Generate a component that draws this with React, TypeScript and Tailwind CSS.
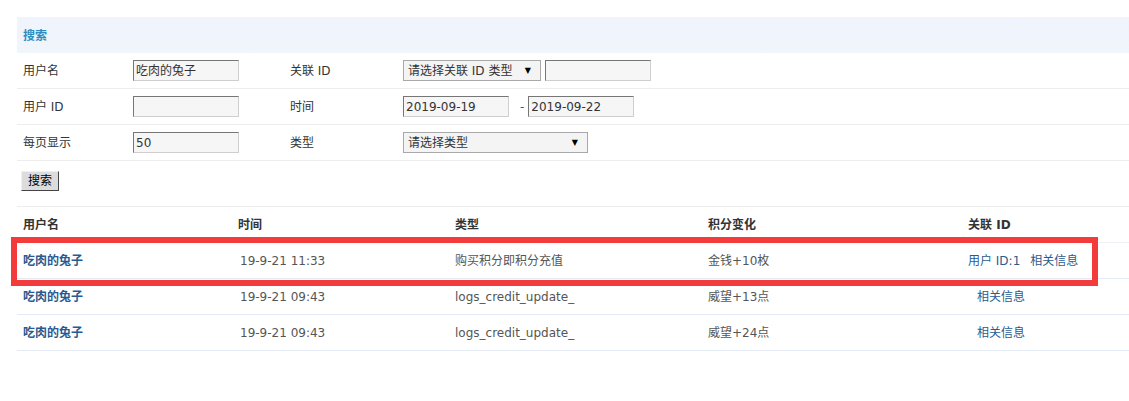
import React from "react";

const font = {
  fontFamily: '"DejaVu Sans", "Noto Sans CJK SC", sans-serif',
};

function TextBox({ value, width = "w-[106px]" }: { value?: string; width?: string }) {
  return (
    <div
      className={`flex h-[21px] ${width} items-center border border-t-[#767676] border-l-[#767676] border-b-[#cfcfcf] border-r-[#cfcfcf] bg-[#f6f6f6] pl-[2px] text-[12px] text-[#333]`}
    >
      {value}
    </div>
  );
}

function SelectBox({ label, width }: { label: string; width: string }) {
  return (
    <div
      className={`flex h-[21px] ${width} items-center justify-between border border-[#a9a9a9] bg-[#f4f4f4] pl-[4px] pr-[9px] text-[12px] text-[#333]`}
    >
      <span>{label}</span>
      <span className="text-[8px] text-black">▼</span>
    </div>
  );
}

const rows = [
  { time: "19-9-21 11:33", type: "购买积分即积分充值", change: "金钱+10枚", uid: true },
  { time: "19-9-21 09:43", type: "logs_credit_update_", change: "威望+13点", uid: false },
  { time: "19-9-21 09:43", type: "logs_credit_update_", change: "威望+24点", uid: false },
];

export default function App() {
  return (
    <div className="h-[401px] w-[1129px] overflow-hidden bg-white pt-[17px] text-[12px]" style={font}>
      <div className="ml-[17px]">
        {/* search panel */}
        <div className="flex h-[36px] items-center bg-gradient-to-b from-[#eef3fd] to-[#f1f6fb] pl-[6px] pt-[2px] font-bold text-[#2d8cc0]">
          搜索
        </div>
        <div className="flex h-[36px] items-center border-b border-[#ededed] text-[#333]">
          <div className="w-[116px] pl-[6px]">用户名</div>
          <TextBox value="吃肉的兔子" />
          <div className="ml-[51px] w-[113px]">关联 ID</div>
          <SelectBox label="请选择关联 ID 类型" width="w-[138px]" />
          <div className="ml-[4px]">
            <TextBox width="w-[106px]" />
          </div>
        </div>
        <div className="flex h-[36px] items-center border-b border-[#ededed] text-[#333]">
          <div className="w-[116px] pl-[6px]">用户 ID</div>
          <TextBox />
          <div className="ml-[51px] w-[113px]">时间</div>
          <TextBox value="2019-09-19" />
          <span className="ml-[11px] mr-[4px] text-[#555]">-</span>
          <TextBox value="2019-09-22" />
        </div>
        <div className="flex h-[36px] items-center border-b border-[#ededed] text-[#333]">
          <div className="w-[116px] pl-[6px]">每页显示</div>
          <TextBox value="50" />
          <div className="ml-[51px] w-[113px]">类型</div>
          <SelectBox label="请选择类型" width="w-[185px]" />
        </div>
        <div className="flex h-[46px] items-center border-b border-[#ededed] pl-[4px]">
          <button className="mt-[-6px] h-[20px] w-[38px] border border-t-[#f0f0f0] border-l-[#f0f0f0] border-b-[#444] border-r-[#444] bg-[#dcdcdc] text-[12px] text-black">
            搜索
          </button>
        </div>

        {/* result table */}
        <div className="flex h-[36px] items-center border-b border-[#eef2f8] font-bold text-[#333]">
          <div className="w-[221px] pl-[6px]">用户名</div>
          <div className="w-[217px]">时间</div>
          <div className="w-[253px]">类型</div>
          <div className="w-[260px]">积分变化</div>
          <div>关联 ID</div>
        </div>
        {rows.map((r, i) => (
          <div key={i} className="relative flex h-[36px] items-center border-b border-[#e4ebf5] text-[#555]">
            <div className="w-[221px] pl-[6px] font-bold text-[#2a5a8f]">吃肉的兔子</div>
            <div className="w-[217px] pl-[2px]">{r.time}</div>
            <div className="w-[253px]">{r.type}</div>
            <div className="w-[260px]">{r.change}</div>
            {r.uid ? (
              <div className="flex gap-[10px] text-[#2a5a8f]">
                <span>用户 ID:1</span>
                <span>相关信息</span>
              </div>
            ) : (
              <div className="pl-[9px] text-[#2a5a8f]">相关信息</div>
            )}
            {i === 0 && (
              <div className="pointer-events-none absolute left-[-6px] top-[-6px] h-[49px] w-[1087px] border-[6px] border-[#f43b3b]" />
            )}
          </div>
        ))}
      </div>
    </div>
  );
}
